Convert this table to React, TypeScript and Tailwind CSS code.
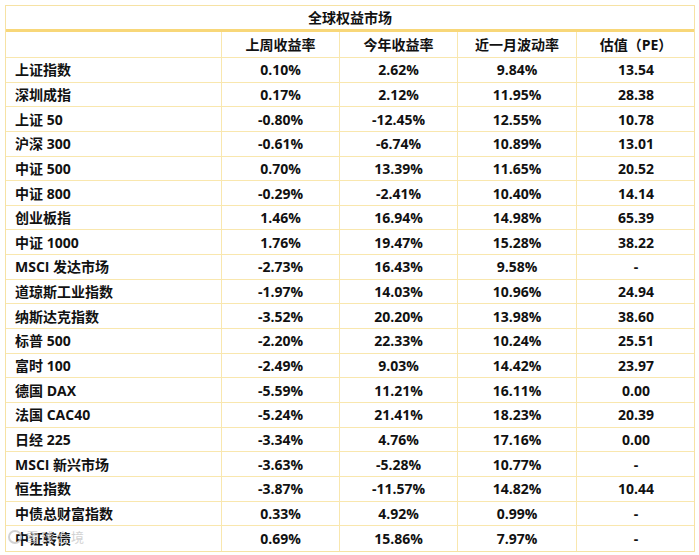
import React from 'react';

type Row = [string, string, string, string, string];

const rows: Row[] = [
  ['上证指数', '0.10%', '2.62%', '9.84%', '13.54'],
  ['深圳成指', '0.17%', '2.12%', '11.95%', '28.38'],
  ['上证 50', '-0.80%', '-12.45%', '12.55%', '10.78'],
  ['沪深 300', '-0.61%', '-6.74%', '10.89%', '13.01'],
  ['中证 500', '0.70%', '13.39%', '11.65%', '20.52'],
  ['中证 800', '-0.29%', '-2.41%', '10.40%', '14.14'],
  ['创业板指', '1.46%', '16.94%', '14.98%', '65.39'],
  ['中证 1000', '1.76%', '19.47%', '15.28%', '38.22'],
  ['MSCI 发达市场', '-2.73%', '16.43%', '9.58%', '-'],
  ['道琼斯工业指数', '-1.97%', '14.03%', '10.96%', '24.94'],
  ['纳斯达克指数', '-3.52%', '20.20%', '13.98%', '38.60'],
  ['标普 500', '-2.20%', '22.33%', '10.24%', '25.51'],
  ['富时 100', '-2.49%', '9.03%', '14.42%', '23.97'],
  ['德国 DAX', '-5.59%', '11.21%', '16.11%', '0.00'],
  ['法国 CAC40', '-5.24%', '21.41%', '18.23%', '20.39'],
  ['日经 225', '-3.34%', '4.76%', '17.16%', '0.00'],
  ['MSCI 新兴市场', '-3.63%', '-5.28%', '10.77%', '-'],
  ['恒生指数', '-3.87%', '-11.57%', '14.82%', '10.44'],
  ['中债总财富指数', '0.33%', '4.92%', '0.99%', '-'],
  ['中证转债', '0.69%', '15.86%', '7.97%', '-'],
];

const headers = ['', '上周收益率', '今年收益率', '近一月波动率', '估值（PE）'];
const cols = 'grid grid-cols-[216px_118px_118px_119px_118px]';

export default function App() {
  return (
    <div className="relative w-[699px] h-[555px] bg-white pt-[5px] pl-[5px] font-['Open_Sans','Noto_Sans_CJK_SC',sans-serif] text-[14px] font-bold text-[#111]">
      <div className="w-[690px] border border-[#f6e2a4]">
        {/* title */}
        <div className="h-[26px] flex items-center justify-center border-b-[3px] border-[#f8d779]">
          全球权益市场
        </div>

        {/* header */}
        <div className={`${cols} h-[26px] border-b border-[#f9e7ae]`}>
          {headers.map((h, i) => (
            <div
              key={i}
              className={`flex items-center justify-center ${i < 4 ? 'border-r border-[#f9e7ae]' : ''}`}
            >
              {h}
            </div>
          ))}
        </div>

        {rows.map((r, ri) => (
          <div
            key={ri}
            className={`${cols} h-[24.65px] ${ri < rows.length - 1 ? 'border-b border-[#f9e7ae]' : ''}`}
          >
            {r.map((c, ci) => (
              <div
                key={ci}
                className={`flex items-center ${ci === 0 ? 'pl-[9px]' : 'justify-center'} ${ci < 4 ? 'border-r border-[#f9e7ae]' : ''}`}
              >
                {c}
              </div>
            ))}
          </div>
        ))}
      </div>

      {/* watermark */}
      <div className="absolute left-[8px] bottom-[8px] flex items-center gap-[4px] text-[13px] font-normal text-[#c8c8c8] opacity-80">
        <span className="w-[14px] h-[14px] rounded-full border-2 border-[#c8c8c8]" />
        <span className="tracking-[2px]">雪球合境</span>
      </div>
    </div>
  );
}
